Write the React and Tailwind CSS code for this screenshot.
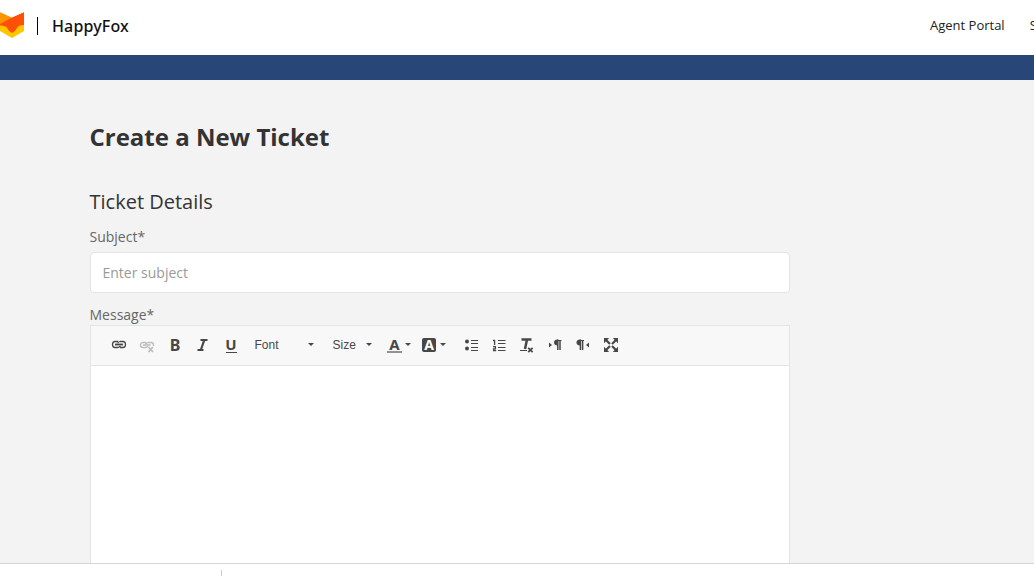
import React from "react";

function Icon({ children, className = "" }) {
  return (
    <span className={`flex h-7 w-7 shrink-0 items-center justify-center ${className}`}>
      <svg width="16" height="16" viewBox="0 0 16 16" fill="none" stroke="#474747" overflow="visible">
        {children}
      </svg>
    </span>
  );
}

function LetterIcon({ children, className = "" }) {
  return (
    <span className={`flex h-7 w-7 shrink-0 items-center justify-center font-['Noto_Sans',sans-serif] font-bold ${className}`}>
      {children}
    </span>
  );
}

function Caret() {
  return (
    <svg width="6" height="3" viewBox="0 0 6 3" className="shrink-0">
      <path d="M0 0h6L3 3z" fill="#474747" />
    </svg>
  );
}

const glyph = { fill: "#474747", stroke: "none" };

function Toolbar() {
  return (
    <div className="flex h-10 items-center border-b border-[#e4e4e4] bg-[#f8f8f8] pb-0.5 pl-3.5 font-['Liberation_Sans',Arial,sans-serif] text-xs text-[#474747]">
      <Icon>
        <path d="M7 4.5H4Q1.5 4.5 1.5 7.5T4 10.5h3M9 4.5h3q2.5 0 2.5 3T12 10.5H9" strokeWidth="1.3" />
        <path d="M6.5 6.2Q8 4.5 9.2 4.5M9.5 8.8Q8 10.5 6.800 10.5" strokeWidth="1.2" />
        <path d="M4 7.5h8" strokeWidth="1.8" />
      </Icon>
      <Icon>
        <g stroke="#bdbdbd">
          <path d="M7 5.5H4Q1.5 5.5 1.5 8T4 10.500h3M9 5.5h3q2.500 0 2.500 2.500v1M6.5 7Q8 5.500 9.200 5.500M9 9.300l-2 1.200" strokeWidth="1.4" />
          <path d="M4 8h7.500" strokeWidth="1.600" />
          <path d="M9.500 10l4.500 5M14 10L9.500 15" strokeWidth="1.800" />
        </g>
      </Icon>
      <LetterIcon className="text-base leading-5">B</LetterIcon>
      <Icon>
        <path d="M5.500 3h7M2.500 13h6M9.300 3L5.800 13" strokeWidth="2.200" />
      </Icon>
      <LetterIcon className="pt-px text-[15px] leading-5">
        <span className="flex h-[15px] w-[11px] items-center justify-center border-b border-[#474747] pb-0.5">U</span>
      </LetterIcon>
      <span className="flex w-[78px] items-center justify-between pr-[9px] pl-[9.5px]">
        <span>Font</span><Caret />
      </span>
      <span className="flex w-[58px] items-center justify-between pr-[9px] pl-[9.5px]">
        <span>Size</span><Caret />
      </span>
      <span className="flex w-[35px] items-center gap-[3px] pl-1.5">
        <span className="flex h-4 w-[15px] items-center justify-center border-b-2 border-[#929292] font-['Noto_Sans',sans-serif] text-[15px] leading-5 font-bold">A</span>
        <Caret />
      </span>
      <span className="flex w-[41px] items-center gap-1 pl-1.5">
        <span className="flex h-3.5 w-3.5 items-center justify-center rounded-xs bg-[#474747] font-['Noto_Sans',sans-serif] text-sm leading-5 font-bold text-white">A</span>
        <Caret />
      </span>
      <Icon>
        <circle cx="4" cy="4.6" r="2" {...glyph} />
        <circle cx="4" cy="11.6" r="2" {...glyph} />
        <path d="M8 3.5h7M8 6.5h7M8 10.5h7M8 13.5h7" />
      </Icon>
      <Icon>
        <path d="M2 3.5h2M3.6 3v5M2 9.6h2.4v2.2H2.6v1.9h2.6" strokeWidth="1.3" />
        <path d="M7 3.5h7.5M7 6.5h7.5M7 10.5h7.5M7 13.5h7.5" />
      </Icon>
      <Icon>
        <path d="M2.500 2.500h10M8 2.500L6 12" strokeWidth="2.500" />
        <path d="M1 13.5h7" />
        <path d="M9.2 10.8l4.400 4.400M13.600 10.800l-4.400 4.400" strokeWidth="1.700" />
      </Icon>
      <Icon>
        <path d="M2 5.5v5L5 8z" {...glyph} />
        <path d="M10 3H14.500V4H10z" {...glyph} />
        <path d="M10.800 2.500Q7 2.500 7 5.500t3.800 3z" {...glyph} />
        <path d="M10.800 2.500v10.500M13 3v10" strokeWidth="1.500" />
      </Icon>
      <Icon>
        <path d="M14 5.5v5L11 8z" {...glyph} />
        <path d="M5 3H9V4H5z" {...glyph} />
        <path d="M5.400 2.500Q1.500 2.500 1.500 5.500t3.900 3z" {...glyph} />
        <path d="M5.400 2.500v10.500M7.600 3v10" strokeWidth="1.500" />
      </Icon>
      <Icon>
        <path d="M2.5 2.5L7 7M13.5 2.5L9 7M2.5 13.5L7 9M13.5 13.5L9 9" strokeWidth="2.2" />
        <path d="M1 1h5.2L1 6.2zM15 1v5.2L9.8 1zM1 15V9.8L6.2 15zM15 15H9.8L15 9.8z" {...glyph} />
      </Icon>
    </div>
  );
}

export default function App() {
  return (
    <div className="flex h-[576px] w-[1034px] flex-col overflow-hidden bg-white font-['Open_Sans','Noto_Sans',sans-serif]">
      <header className="flex h-[55px] shrink-0 items-center pb-[3px]">
        <svg width="24" height="26" viewBox="0 0 24 26" className="mt-[-2px] shrink-0">
          <path d="M0 12h24v7L12 26 0 19z" fill="#ffc600" />
          <path d="M0 10L24 0v13q-6 0-7 3Q16 18.500 12 21 8 18.500 7 16 6 13.500 0 13.500z" fill="#ff5008" />
          <path d="M0 0l12 5.500L0 12z" fill="#ff9300" />
          <path d="M0 0h24L12 5.500z" fill="#fff" />
        </svg>
        <span className="ml-[13px] h-[18px] w-px shrink-0 bg-black" />
        <span className="ml-3.5 w-[77px] shrink-0 font-['Noto_Sans'] text-base font-medium tracking-[0.15px] text-[#111]">HappyFox</span>
        <nav className="ml-[801px] flex shrink-0 gap-[25px] whitespace-nowrap text-[13px] text-[#222]">
          <span>Agent Portal</span>
          <span>Submit a ticket</span>
        </nav>
      </header>
      <div className="h-[25px] shrink-0 bg-[#284677]" />
      <main className="flex h-[483px] shrink-0 flex-col overflow-hidden bg-[#f3f3f3] pl-[90px]">
        <h1 className="mt-[41px] -ml-[0.5px] text-2xl leading-8 font-bold text-[#333]">Create a New Ticket</h1>
        <h2 className="mt-[35px] -ml-[0.5px] text-xl leading-7 text-[#333]">Ticket Details</h2>
        <label className="mt-[11px] -ml-[0.5px] text-sm leading-5 text-[#666]">Subject*</label>
        <div className="mt-[5px] flex h-[41px] w-[700px] shrink-0 items-center rounded border border-[#e4e4e4] bg-white pl-[11.5px] text-sm text-[#999]">Enter subject</div>
        <label className="mt-3 -ml-[0.5px] text-sm leading-5 text-[#666]">Message*</label>
        <div className="h-[260px] w-[700px] shrink-0 border border-[#e4e4e4] bg-white">
          <Toolbar />
        </div>
      </main>
      <footer className="h-[13px] shrink-0 border-t border-[#d6d6d6] bg-white pt-1.5 pl-[221px]">
        <div className="h-1.5 w-px bg-[#ccc]" />
      </footer>
    </div>
  );
}
